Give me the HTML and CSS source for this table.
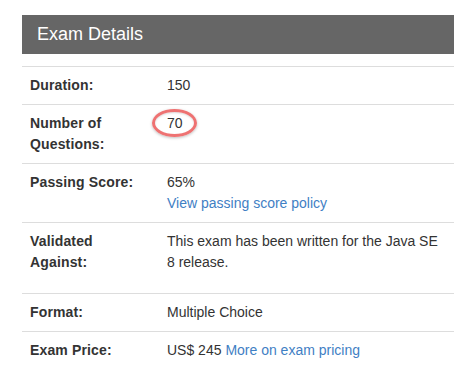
FILE: index.html
```html
<!DOCTYPE html>
<html>
<head>
<meta charset="utf-8">
<link rel="stylesheet" href="styles.css">
</head>
<body>
<div class="panel">
  <div class="panel-head">Exam Details</div>
  <table class="details">
    <tr><th>Duration:</th><td>150</td></tr>
    <tr><th>Number of Questions:</th><td><span class="circled">70<span class="ring"></span></span></td></tr>
    <tr><th>Passing Score:</th><td>65%<br><a href="#">View passing score policy</a></td></tr>
    <tr><th>Validated Against:</th><td><p class="para">This exam has been written for the Java SE 8 release.</p></td></tr>
    <tr><th>Format:</th><td>Multiple Choice</td></tr>
    <tr><th>Exam Price:</th><td>US$ 245 <a href="#">More on exam pricing</a></td></tr>
  </table>
</div>
</body>
</html>
```
FILE: styles.css
```css
html, body {
  margin: 0;
  padding: 0;
  background: #fff;
}
body {
  font-family: "Liberation Sans", Arial, sans-serif;
  font-size: 14px;
  line-height: 21px;
  color: #333;
}
.panel {
  width: 432px;
  margin: 15px 0 0 22px;
}
.panel-head {
  background: #666;
  color: #fff;
  font-size: 18px;
  height: 39px;
  line-height: 38px;
  padding-left: 15px;
  box-sizing: border-box;
}
.details {
  width: 432px;
  margin-top: 12px;
  border-collapse: collapse;
  table-layout: fixed;
}
.details th,
.details td {
  border-top: 1px solid #ddd;
  padding: 8px;
  vertical-align: top;
  text-align: left;
}
.details th {
  width: 110px;
  padding-right: 19px;
  font-weight: bold;
  letter-spacing: 0.15px;
}
.para {
  margin: 0 0 12px;
}
a {
  color: #3f80c4;
  text-decoration: none;
}
.circled {
  position: relative;
  display: inline-block;
}
.ring {
  position: absolute;
  left: -15px;
  top: -4px;
  width: 39px;
  height: 22px;
  border: 3px solid #ee7272;
  border-radius: 50%;
  box-shadow: 0 1px 3px rgba(0,0,0,0.25), inset 0 1px 2px rgba(0,0,0,0.15);
}
```
